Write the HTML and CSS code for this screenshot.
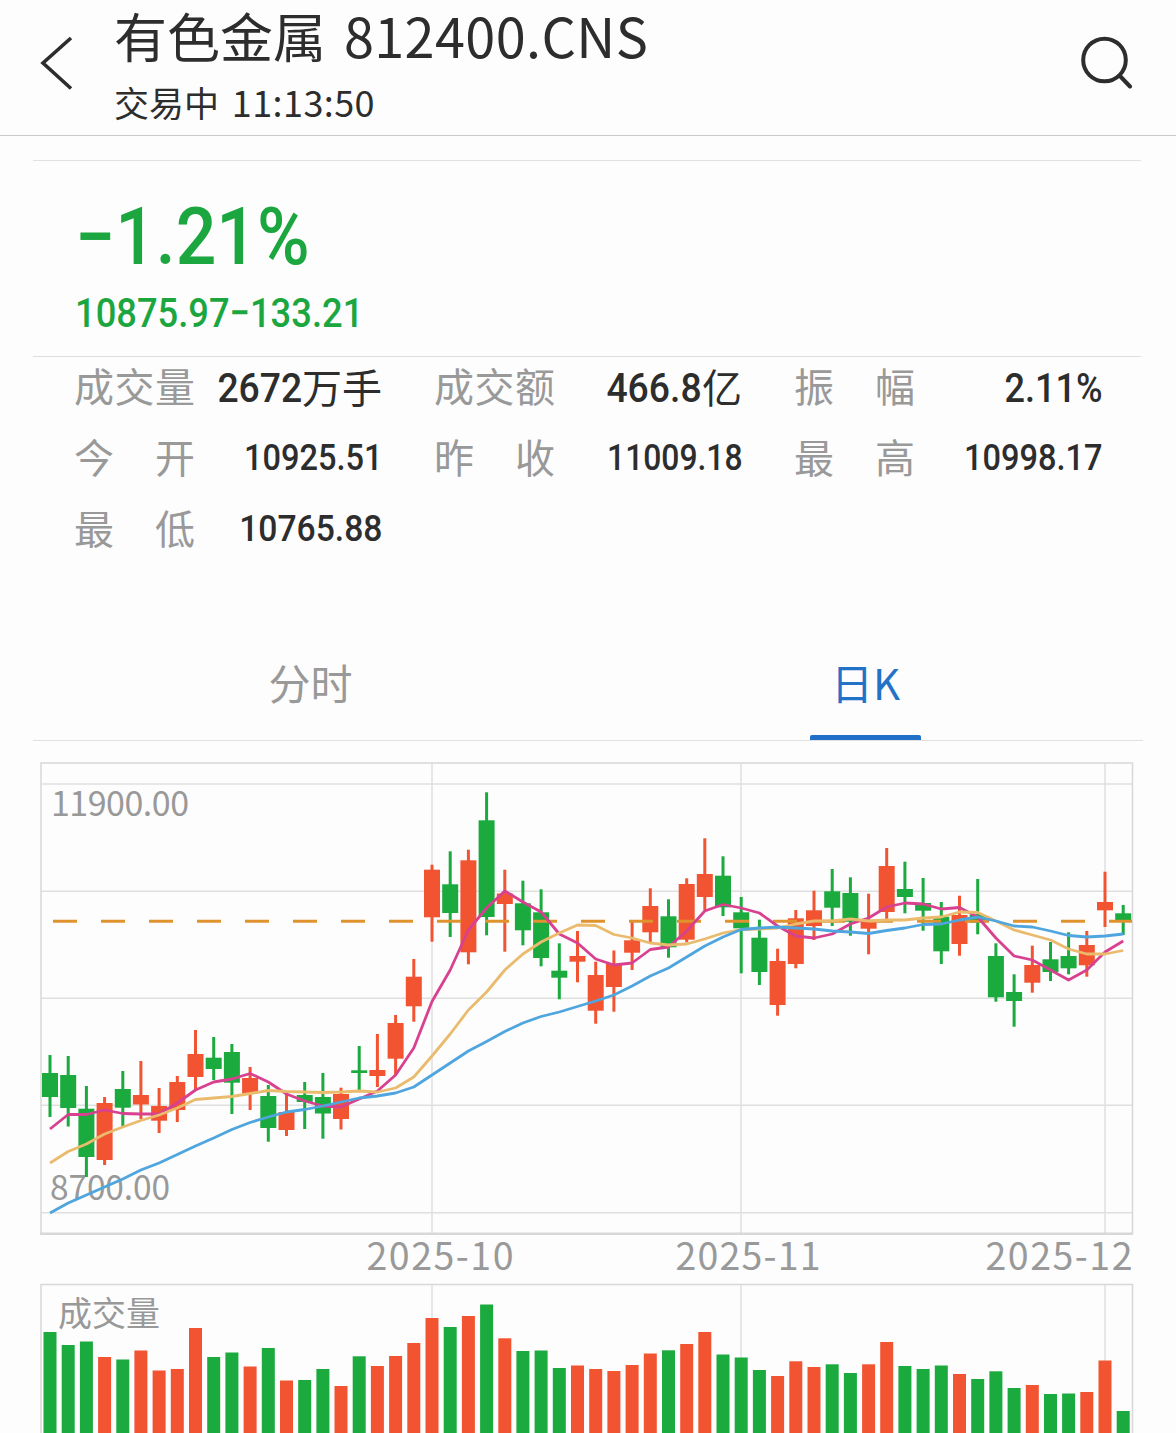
FILE: index.html
```html
<!DOCTYPE html>
<html lang="zh-CN">
<head>
<meta charset="utf-8">
<title>有色金属 812400.CNS</title>
<link rel="stylesheet" href="styles.css">
</head>
<body>
<header class="topbar">
  <svg class="back" viewBox="0 0 36 56" width="36" height="56"><path d="M33 3 5 28 33 53.500"/></svg>
  <div class="heading">
    <h1 class="title">有色金属 <span class="code">812400.CNS</span></h1>
    <p class="status">交易中 <span class="time">11:13:50</span></p>
  </div>
  <svg class="search" viewBox="0 0 56 56" width="56" height="56"><circle cx="26.500" cy="27" r="21.300"/><path d="M41.500 42.500 52 53.500"/></svg>
</header>

<main class="content">
  <section class="quote">
    <div class="change"><span class="num">−1.21%</span></div>
    <div class="price"><span class="num">10875.97−133.21</span></div>
  </section>

  <dl class="stats">
    <div class="stat tall"><dt><span>成</span><span>交</span><span>量</span></dt><dd><span class="num wide">2672</span>万手</dd></div>
    <div class="stat tall"><dt><span>成</span><span>交</span><span>额</span></dt><dd><span class="num wide">466.8</span>亿</dd></div>
    <div class="stat tall"><dt><span>振</span><span>幅</span></dt><dd><span class="num">2.11%</span></dd></div>
    <div class="stat"><dt><span>今</span><span>开</span></dt><dd><span class="num">10925.51</span></dd></div>
    <div class="stat"><dt><span>昨</span><span>收</span></dt><dd><span class="num narrow">11009.18</span></dd></div>
    <div class="stat"><dt><span>最</span><span>高</span></dt><dd><span class="num">10998.17</span></dd></div>
    <div class="stat"><dt><span>最</span><span>低</span></dt><dd><span class="num wide">10765.88</span></dd></div>
  </dl>

  <nav class="tabs">
    <a class="tab">分时</a>
    <a class="tab active">日K</a>
  </nav>
</main>

<svg class="chart" id="chart" viewBox="0 741 1176 692" width="1176" height="692"></svg>
<script src="chart.js"></script>
</body>
</html>
```
FILE: styles.css
```css
* { box-sizing: border-box; margin: 0; padding: 0; }
body {
  width: 1176px;
  height: 1433px;
  overflow: hidden;
  background: #fdfdfd;
  color: #2d2d2d;
  font-family: "Noto Sans CJK SC", sans-serif;
}
.topbar {
  display: flex;
  align-items: flex-start;
  height: 136px;
  padding: 5px 42px 0 38px;
  border-bottom: 1px solid #cbcbcb;
}
.back, .search { flex: none; fill: none; stroke: #2d2d2d; }
.back { margin-top: 30px; stroke-width: 3.6; }
.search { margin-top: 28px; stroke-width: 4; stroke-linecap: round; }
.heading { flex: 1; margin-left: 40px; white-space: nowrap; }
.title { font-size: 53px; line-height: 60px; font-weight: 400; }
.code { margin-left: 6px; font-size: 54px; line-height: 1; letter-spacing: .4px; }
.status { margin-top: 17px; font-size: 35px; line-height: 40px; }
.time { margin-left: 5px; font-size: 36px; line-height: 1; letter-spacing: .4px; }
.content { margin: 24px 35px 0 33px; }
.num {
  display: inline-block;
  font-family: Roboto, sans-serif;
  font-weight: 500;
  transform: scaleX(.88);
  transform-origin: 0 50%;
}
.quote {
  height: 197px;
  padding: 29px 0 0 42px;
  border-top: 1px solid #e2e2e2;
  border-bottom: 1px solid #dedede;
  color: #1ca63f;
}
.change { font-size: 79px; line-height: 80px; }
.change .num { transform: scaleX(.905); }
.price { margin-top: 7px; font-size: 41.500px; line-height: 50px; }
.price .num { transform: scaleX(.875); }
.stats {
  display: grid;
  grid-template-columns: repeat(3, 308px);
  grid-auto-rows: 71px;
  column-gap: 52px;
  height: 277px;
  padding: 0 0 0 41px;
}
.stat { display: flex; justify-content: space-between; line-height: 60px; }
dt {
  display: flex;
  justify-content: space-between;
  width: 121px;
  margin-top: -2px;
  font-size: 40px;
  color: #999;
}
dd { display: flex; font-size: 37px; white-space: nowrap; }
.tall dd { margin-top: -1px; font-size: 40px; }
.tall .num { margin-top: 2px; font-size: 41px; }
dd .num { transform-origin: 100% 50%; }
dd .wide { transform: scaleX(.91); }
dd .narrow { transform: scaleX(.86); }
.tabs {
  display: grid;
  grid-template-columns: 1fr 1fr;
  height: 107px;
  margin-right: -2px;
  border-bottom: 1px solid #e0e0e0;
}
.tab {
  display: flex;
  flex-direction: column;
  align-items: center;
  font-size: 42px;
  line-height: 95px;
  color: #999;
}
.tab.active { color: #2272c8; }
.tab.active::after {
  content: "";
  width: 111px;
  height: 5px;
  margin-top: 6px;
  border-radius: 2px 2px 0 0;
  background: #2070c8;
}
.chart { display: block; font-family: "Noto Sans CJK SC", sans-serif; }
.grid { stroke: #e0e0e0; stroke-width: 1.5; fill: none; }
.frame { stroke: #d8d8d8; stroke-width: 1.5; fill: none; }
.base { stroke-width: 2.5; }
.up { fill: #f25432; }
.down { fill: #1baa3d; }
.ref { stroke: #df932f; stroke-width: 3; stroke-dasharray: 24 24; }
.ma { fill: none; stroke-width: 2.8; stroke-linejoin: round; }
.ma5 { stroke: #d8418f; }
.ma10 { stroke: #eabb6d; }
.ma20 { stroke: #4fa5dd; }
.label { fill: #999; }
```
FILE: chart.js
```js
// Each candle: direction, high, body top, body bottom, low, volume top.
const candles = `
d 1055 1073 1097 1117 1332;d 1056 1075 1108 1126.5 1345;d 1086 1108.7 1157 1177 1341.5;u 1097 1103 1160 1165 1357
d 1071 1089 1107.7 1127 1359.5;u 1061 1095 1104.5 1119 1350.5;u 1088 1106 1120.7 1133 1370.5;u 1076 1082 1110 1122 1369
u 1030 1054 1077 1090 1328;d 1037 1057.7 1069 1080 1357;d 1044 1052 1082.7 1114 1352.5;u 1067 1078 1093.5 1110 1366.5
d 1085 1096 1128 1141.7 1348;u 1095 1112 1130 1136 1380.5;d 1082 1095 1102 1129 1380;d 1073 1097 1113.5 1138.7 1369
u 1087.7 1094 1119 1129.5 1386;d 1046 1070.3 1073 1090 1356.3;u 1034 1070 1076 1087 1366;u 1015 1023 1058.7 1075 1356
u 959 976.7 1006.3 1021.7 1343;u 864.7 869.7 917.3 941.7 1318;d 851.3 884.3 913 937 1327;u 849.7 860.3 952.3 964.3 1316
d 792.3 820.3 917 935.3 1304.5;u 869.7 893.5 904 951.7 1338.3;d 880.7 903.3 930.3 945.3 1351;d 889.3 912.3 958 966.3 1350.5
d 943.3 970.7 977.7 999.3 1368;u 931 956 961.7 982.3 1365.5;u 961.7 975 1010.7 1023.7 1369;u 950.5 964 987 1011.7 1371
u 920.3 940.3 952.7 970 1365;u 888.3 906 932.3 942 1353.5;d 899.3 916.3 947.3 957.7 1350.3;u 878.3 884 939.7 942.3 1344
u 838.3 874 897 910 1332;d 856.3 875.7 907.3 916 1354.5;d 897 912.3 928.3 973.3 1357.5;d 919.7 937.7 972 985 1370
u 948.7 961 1005 1015.7 1376;u 910 918.3 964 968.3 1361.3;u 890.7 910.3 926 940 1367;d 869 891.3 907.7 926 1364.3
d 877.3 893 921.7 935.7 1373;u 893.7 920 928.7 954.3 1364.3;u 848 866 912 920 1342;d 861.7 889 897 913.3 1366
d 878 903 910.7 930.7 1369;d 902 916.7 951.3 964 1365.5;u 895.7 915 944 955.7 1374;d 879 915 922.7 934.3 1379
d 943.3 956 997.3 1001.7 1371.3;d 974.3 992 1001 1026.7 1388;u 945.7 965 982.7 992.7 1385;d 942 959.3 972 981 1394
d 932.3 956 968.3 974.3 1393.5;u 931 945 965.3 976.7 1392;u 871.7 902 910.3 927 1360.5;d 905 913.3 920.7 935 1411
`.trim().split(/[;\n]/).map(row => row.split(' '));

const averages = {
  ma5: [1129,1114.5,1114.5,1110,1113.5,1114,1114,1103,1090,1082,1079,1073.5,1082,1094,1101,1106,1107,1099,1091,1075,1048,1001.5,970,930,908,891,902,912,934,943,959,965,963,949.5,947,931,911,904.5,908,913,926,936,938,934,924,918,907,903,904,909,907.5,917,938,956,960,970,980,970,952,941],
  ma10: [1163,1151.5,1144,1134,1127,1120.5,1115,1108,1099.5,1098,1096.5,1093.5,1090.5,1091.5,1092,1092.5,1092,1091,1092,1088,1077,1056,1034,1010,992,970,954,942,933,925,925.5,934.5,938,943,945,944,939,933,929.5,929,928,924,921,921,919,921,920,920,918,917,912,912.5,921,930,935,940,949,954,954,950.5],
  ma20: [1213,1203,1195,1187,1179,1170,1163,1154.5,1146,1138,1129.5,1122.5,1117,1112,1109.5,1106,1102,1098,1096,1093,1087,1075,1063,1051,1041.5,1031.5,1023,1016.5,1012,1006.5,1001,995,986,976,968,957,946,937,929.5,928,927,928,929,931,932,933.5,930.5,928,924.5,924,920,917,921,926,927,931,935.5,937,936,934]
};

const x = i => 50 + i * 18.19;
const rect = (cls, cx, w, top, bottom) =>
  `<rect class="${cls}" x="${(cx - w / 2).toFixed(1)}" y="${top}" width="${w}" height="${(bottom - top).toFixed(1)}"/>`;
const label = (px, py, size, width, text) =>
  `<text class="label" x="${px}" y="${py}" font-size="${size}" textLength="${width}">${text}</text>`;

let out = '<path class="grid" d="M41 784H1132M41 891.3H1132M41 998.3H1132M41 1105.3H1132M41 1212.7H1132M432 763V1234M741 763V1234M1105 763V1234M432 1284.5V1433M741 1284.5V1433M1105 1284.5V1433"/>';
out += '<path class="frame" d="M41 1234V763H1132.5V1234M41 1433V1284.5H1132.5V1433"/><path class="frame base" d="M40 1233.8H1133"/>';
out += label(51, 816, 34, 138, '11900.00') + label(50, 1199.5, 33.5, 120, '8700.00');
out += label(366.500, 1270, 37.5, 147, '2025-10') + label(675.5, 1270, 37.5, 145, '2025-11') + label(985.5, 1270, 37.5, 147, '2025-12');
out += label(58, 1326, 34, 102, '成交量');

candles.forEach(([dir, high, top, bottom, low, vol], i) => {
  const cls = dir === 'u' ? 'up' : 'down';
  out += rect(cls, x(i), 3, high, low) + rect(cls, x(i), 16, top, bottom) + rect(cls, x(i), 13, vol, 1433);
});
out += '<path class="ref" d="M53 921.3H1132"/>';
for (const [name, values] of Object.entries(averages)) {
  out += `<polyline class="ma ${name}" points="${values.map((v, i) => x(i).toFixed(1) + ',' + v).join(' ')}"/>`;
}
document.getElementById('chart').innerHTML = out;
```
